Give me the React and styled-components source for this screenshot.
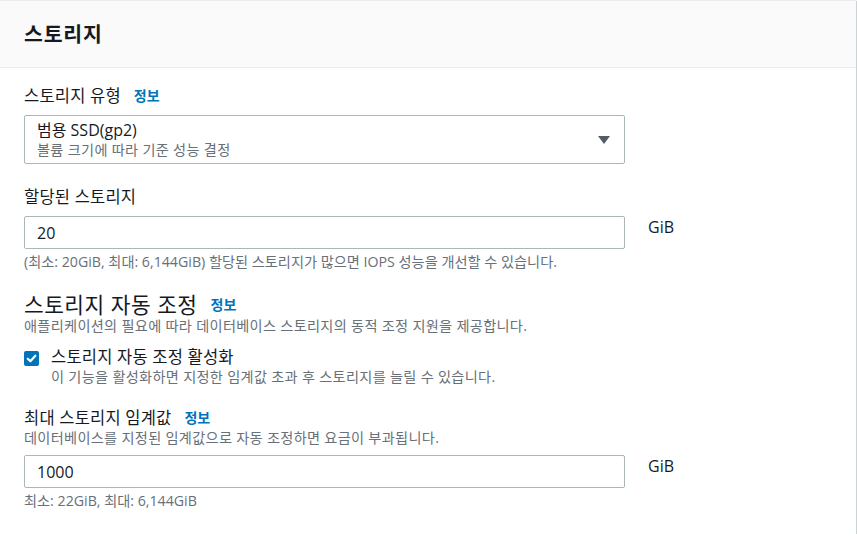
import React from "react";
import styled, { createGlobalStyle } from "styled-components";

const Global = createGlobalStyle`
  html, body { margin: 0; padding: 0; background: #ffffff; }
  body {
    font-family: "Open Sans", "Noto Sans CJK KR", sans-serif;
    color: #16191f;
    -webkit-font-smoothing: antialiased;
  }
  * { box-sizing: border-box; }
`;

const Panel = styled.section`
  width: 856px;
  height: 534px;
  background: #ffffff;
  border-top: 1px solid #eaeded;
  box-shadow: 0 1px 1px 0 rgba(0, 28, 36, 0.3), 1px 1px 1px 0 rgba(0, 28, 36, 0.15),
    -1px 1px 1px 0 rgba(0, 28, 36, 0.15);
  display: flex;
  flex-direction: column;
`;

const Header = styled.header`
  height: 67px;
  background: #fafafa;
  border-bottom: 1px solid #eaeded;
  padding: 0 24px 1px;
  display: flex;
  align-items: center;
`;

const Title = styled.h2`
  margin: 0;
  font-size: 20.5px;
  letter-spacing: 0.8px;
  font-weight: 700;
  line-height: 24px;
  color: #16191f;
`;

const Body = styled.div`
  padding: 17px 24px 21px;
  display: flex;
  flex-direction: column;
`;

const Field = styled.div`
  display: flex;
  flex-direction: column;
  margin-top: ${(p) => p.$gap || 0}px;
`;

const LabelRow = styled.div`
  display: flex;
  align-items: center;
  gap: 13px;
`;

const Label = styled.span`
  font-size: ${(p) => (p.$big ? 21.4 : 16.5)}px;
  letter-spacing: ${(p) => (p.$big ? 0.5 : 0.2)}px;
  line-height: ${(p) => (p.$big ? 24 : 22)}px;
  color: #16191f;
`;

const Info = styled.a`
  font-size: 14px;
  font-weight: 700;
  color: #0073bb;
  text-decoration: none;
  line-height: 18px;
`;

const Desc = styled.div`
  font-size: 14.2px;
  letter-spacing: 0.3px;
  line-height: 18px;
  color: #687078;
`;

const Hint = styled(Desc)`
  margin-top: 4px;
  letter-spacing: 0;
`;

const Select = styled.div`
  margin-top: 8px;
  width: 601px;
  height: 49px;
  border: 1px solid #aab7b8;
  border-radius: 2px;
  padding: 4px 14px 3px 12px;
  display: flex;
  align-items: center;
  justify-content: space-between;
`;

const SelectText = styled.div`
  display: flex;
  flex-direction: column;
`;

const SelectMain = styled.span`
  font-size: 16px;
  line-height: 20px;
  color: #16191f;
`;

const SelectSub = styled.span`
  font-size: 14.2px;
  letter-spacing: 0.3px;
  line-height: 20px;
  color: #687078;
`;

const Caret = styled.svg`
  width: 12px;
  height: 8px;
  display: block;
`;

const InputRow = styled.div`
  margin-top: 8px;
  display: flex;
  align-items: flex-start;
  gap: 23px;
`;

const Input = styled.div`
  width: 601px;
  height: 33px;
  border: 1px solid #aab7b8;
  border-radius: 2px;
  padding: 0 12px;
  display: flex;
  align-items: center;
  font-size: 16px;
  color: #16191f;
`;

const Unit = styled.span`
  font-size: 16px;
  line-height: 22px;
  color: #16191f;
`;

const CheckRow = styled.div`
  margin-top: 11px;
  display: flex;
  align-items: flex-start;
  gap: 12px;
`;

const Box = styled.span`
  width: 15px;
  height: 15px;
  margin-top: 5px;
  border-radius: 2px;
  background: #0073bb;
  display: flex;
  align-items: center;
  justify-content: center;
  flex: none;
`;

const CheckText = styled.div`
  display: flex;
  flex-direction: column;
`;

export default function App() {
  return (
    <>
      <Global />
      <Panel>
        <Header>
          <Title>스토리지</Title>
        </Header>
        <Body>
          <Field>
            <LabelRow>
              <Label>스토리지 유형</Label>
              <Info>정보</Info>
            </LabelRow>
            <Select>
              <SelectText>
                <SelectMain>범용 SSD(gp2)</SelectMain>
                <SelectSub>볼륨 크기에 따라 기준 성능 결정</SelectSub>
              </SelectText>
              <Caret viewBox="0 0 12 8">
                <path d="M0 0 H12 L6 8 Z" fill="#545b64" />
              </Caret>
            </Select>
          </Field>

          <Field $gap={22}>
            <LabelRow>
              <Label>할당된 스토리지</Label>
            </LabelRow>
            <InputRow>
              <Input>20</Input>
              <Unit>GiB</Unit>
            </InputRow>
            <Hint>(최소: 20GiB, 최대: 6,144GiB) 할당된 스토리지가 많으면 IOPS 성능을 개선할 수 있습니다.</Hint>
          </Field>

          <Field $gap={22}>
            <LabelRow>
              <Label $big>스토리지 자동 조정</Label>
              <Info>정보</Info>
            </LabelRow>
            <Desc>애플리케이션의 필요에 따라 데이터베이스 스토리지의 동적 조정 지원을 제공합니다.</Desc>
            <CheckRow>
              <Box>
                <svg width="11" height="11" viewBox="0 0 10 10">
                  <path d="M1.6 5.2 L4 7.5 L8.5 2.5" fill="none" stroke="#ffffff" strokeWidth="2" strokeLinecap="round" strokeLinejoin="round" />
                </svg>
              </Box>
              <CheckText>
                <Label>스토리지 자동 조정 활성화</Label>
                <Desc>이 기능을 활성화하면 지정한 임계값 초과 후 스토리지를 늘릴 수 있습니다.</Desc>
              </CheckText>
            </CheckRow>
          </Field>

          <Field $gap={21}>
            <LabelRow>
              <Label>최대 스토리지 임계값</Label>
              <Info>정보</Info>
            </LabelRow>
            <Desc>데이터베이스를 지정된 임계값으로 자동 조정하면 요금이 부과됩니다.</Desc>
            <InputRow>
              <Input>1000</Input>
              <Unit>GiB</Unit>
            </InputRow>
            <Hint>최소: 22GiB, 최대: 6,144GiB</Hint>
          </Field>
        </Body>
      </Panel>
    </>
  );
}
